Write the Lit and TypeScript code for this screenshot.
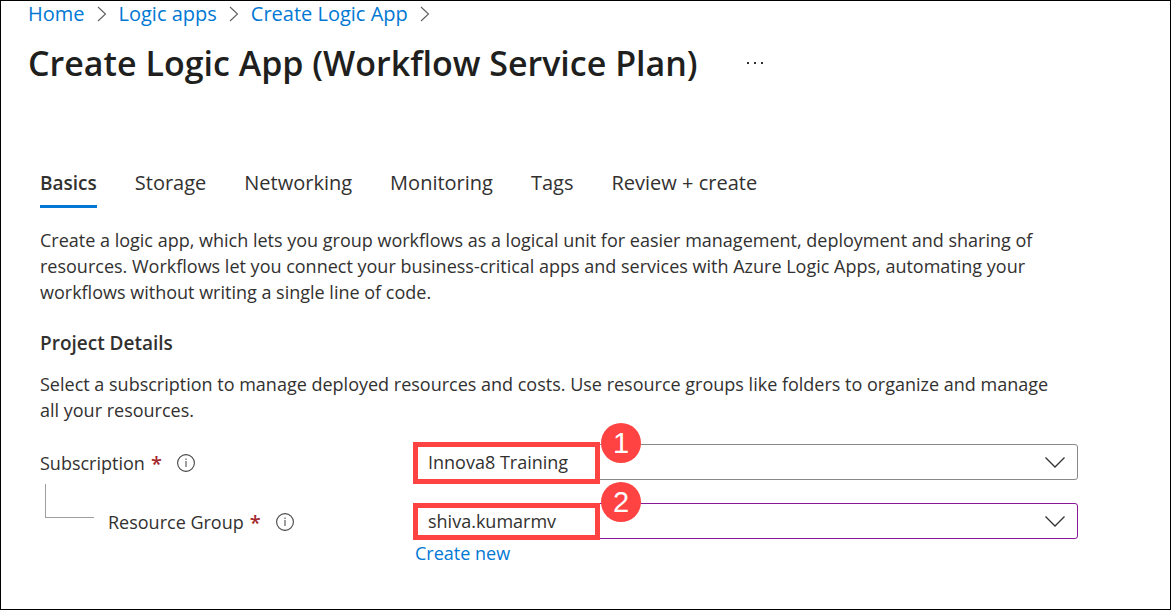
import { LitElement, html, css } from "lit";
import { customElement, property } from "lit/decorators.js";

const infoIcon = html`<svg width="20" height="20" viewBox="0 0 20 20" fill="none" aria-hidden="true">
  <circle cx="10" cy="10" r="8.4" stroke="#484644" stroke-width="1.1" />
  <path d="M10 8v6M10 5.600v1.400" stroke="#605e5c" stroke-width="1.2" />
</svg>`;

@customElement("crumb-trail")
export class CrumbTrail extends LitElement {
  @property({ attribute: false }) items: string[] = [];

  static styles = css`
    .trail { display: flex; align-items: center; margin: 0; padding: 0; list-style: none; }
    .crumb { display: flex; align-items: center; }
    .link { color: #0078d4; text-decoration: none; font-size: 20px; line-height: 26px; }
    .sep { margin: 0 12px; flex: none; }
  `;

  render() {
    return html`<nav aria-label="Breadcrumb">
      <ol class="trail">
        ${this.items.map(
          (item) => html`<li class="crumb">
            <a class="link" href="#">${item}</a>
            <svg class="sep" width="10" height="16" viewBox="0 0 10 16" fill="none" aria-hidden="true">
              <path d="M1 1l7.5 7L1 15" stroke="#605e5c" stroke-width="1.1" />
            </svg>
          </li>`
        )}
      </ol>
    </nav>`;
  }
}

@customElement("tab-strip")
export class TabStrip extends LitElement {
  @property({ attribute: false }) items: string[] = [];

  static styles = css`
    .tabs { display: flex; gap: 38px; }
    .tab {
      font: inherit; font-size: 20px; line-height: 26px; color: #323130;
      padding: 0 0 9px; border: 0; border-bottom: 3px solid transparent; background: none;
      white-space: nowrap;
    }
    .active { font-size: 19px; font-weight: 600; border-bottom-color: #0078d4; }
  `;

  render() {
    return html`<div class="tabs" role="tablist">
      ${this.items.map(
        (item, i) => html`<button class="tab ${i === 0 ? "active" : ""}" role="tab" aria-selected=${i === 0}>${item}</button>`
      )}
    </div>`;
  }
}

@customElement("select-field")
export class SelectField extends LitElement {
  @property() label = "";
  @property() value = "";
  @property() step = "";
  @property({ type: Boolean }) nested = false;

  static styles = css`
    .row { display: grid; grid-template-columns: 374px 1fr; }
    .caption { display: flex; align-items: center; height: 38px; font-size: 18px; color: #323130; }
    .branch {
      width: 49px; height: 34px; margin: 0 14px 42px 5px; box-sizing: border-box; flex: none;
      border-left: 1px solid #a19f9d; border-bottom: 1px solid #a19f9d;
    }
    .required { color: #a4262c; font-size: 20px; font-weight: 600; margin: 0 14px 0 6px; }
    .info { display: flex; padding: 0; border: 0; background: none; }
    .control { position: relative; display: flex; height: 36px; }
    .select {
      appearance: none; flex: 1; min-width: 0; font: inherit; font-size: 18px; color: #323130;
      padding: 0 48px 0 13px; border: 1px solid #8a8886; border-radius: 3px; background: #fff;
    }
    .nested { border-color: #881798; }
    .chevron { position: absolute; right: 13px; top: 12px; pointer-events: none; }
    .frame {
      position: absolute; left: -1px; top: -2px; width: 187px; height: 42px;
      box-sizing: border-box; border: 5px solid #ff4343; pointer-events: none;
    }
    .frame-nested { top: 0; height: 37px; }
    .badge {
      position: absolute; left: 187px; top: -21px; width: 40px; height: 40px; border-radius: 50%;
      display: flex; align-items: center; justify-content: center;
      background: #ff4343; color: #fff; font: 29px/40px "Liberation Sans", Arial, sans-serif;
    }
  `;

  render() {
    return html`<div class="row">
      <div class="caption">
        ${this.nested ? html`<span class="branch"></span>` : ""}
        <label for="field">${this.label}</label>
        <span class="required">*</span>
        <button class="info" aria-label="About ${this.label}">${infoIcon}</button>
      </div>
      <div>
        <div class="control">
          <select id="field" class="select ${this.nested ? "nested" : ""}">
            <option>${this.value}</option>
          </select>
          <svg class="chevron" width="20" height="12" viewBox="0 0 20 12" fill="none" aria-hidden="true">
            <path d="M.5 1.500L10 11l9.500-9.500" stroke="#323130" stroke-width="1.3" />
          </svg>
          <span class="frame ${this.nested ? "frame-nested" : ""}"></span>
          <span class="badge">${this.step}</span>
        </div>
        <slot></slot>
      </div>
    </div>`;
  }
}

@customElement("app-root")
export class AppRoot extends LitElement {
  static styles = css`
    :host {
      display: block; box-sizing: border-box; min-height: 100vh; border: 1px solid #000; background: #fff;
      font-family: "Open Sans", "Noto Sans", sans-serif; color: #323130;
    }
    .header { padding: 0 27px; }
    .title-row { display: flex; align-items: center; gap: 48px; margin-top: 14px; }
    .title { margin: 0; font-size: 34px; line-height: 44px; font-weight: 600; color: #201f1e; }
    .more { display: flex; padding: 0; border: 0; background: none; }
    .content { padding: 85px 92px 0 39px; }
    .text { margin: 0; padding-right: 16px; font-size: 18px; line-height: 26px; }
    .intro { margin-top: 19px; }
    .section { margin: 25px 0 15px; font-size: 19px; line-height: 26px; font-weight: 600; }
    .fields { display: grid; gap: 21px; margin-top: 21px; }
    .link { display: inline-block; margin: 1px 0 0 1px; font-size: 18px; line-height: 26px; color: #0078d4; text-decoration: none; }
  `;

  render() {
    return html`
      <header class="header">
        <crumb-trail .items=${["Home", "Logic apps", "Create Logic App"]}></crumb-trail>
        <div class="title-row">
          <h1 class="title">Create Logic App (Workflow Service Plan)</h1>
          <button class="more" aria-label="More actions">
            <svg width="18" height="4" viewBox="0 0 18 4" fill="#323130">
              <rect x="1" y="1" width="2" height="2" /><rect x="8" y="1" width="2" height="2" /><rect x="15" y="1" width="2" height="2" />
            </svg>
          </button>
        </div>
      </header>
      <main class="content">
        <tab-strip .items=${["Basics", "Storage", "Networking", "Monitoring", "Tags", "Review + create"]}></tab-strip>
        <p class="text intro">
          Create a logic app, which lets you group workflows as a logical unit for easier management, deployment and sharing of
          resources. Workflows let you connect your business-critical apps and services with Azure Logic Apps, automating your
          workflows without writing a single line of code.
        </p>
        <h2 class="section">Project Details</h2>
        <p class="text">
          Select a subscription to manage deployed resources and costs. Use resource groups like folders to organize and manage
          all your resources.
        </p>
        <div class="fields">
          <select-field label="Subscription" value="Innova8 Training" step="1"></select-field>
          <select-field label="Resource Group" value="shiva.kumarmv" step="2" nested>
            <a class="link" href="#">Create new</a>
          </select-field>
        </div>
      </main>
    `;
  }
}
